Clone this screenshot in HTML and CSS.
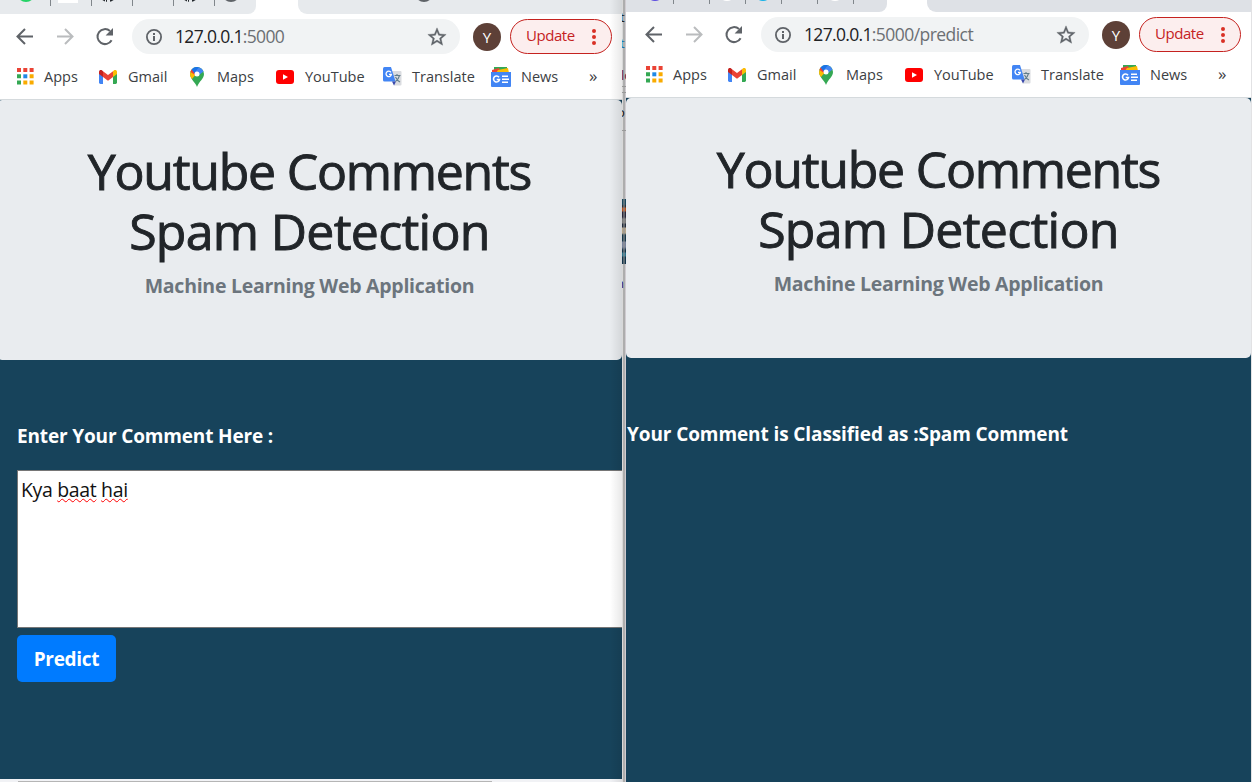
FILE: index.html
```
<!DOCTYPE html>
<html lang="en">
<head>
<meta charset="utf-8">
<title>Youtube Comments Spam Detection</title>
<link rel="stylesheet" href="styles.css">
</head>
<body>
<svg class="defs" aria-hidden="true">
  <symbol id="back" viewBox="0 0 24 24"><path d="M20 11.500H5M12 4 4.500 11.500 12 19" fill="none" stroke="currentColor" stroke-width="2"/></symbol>
  <symbol id="reload" viewBox="0 0 24 24"><path d="M18.600 15.200A7.500 7.500 0 1 1 17 6" fill="none" stroke="currentColor" stroke-width="2"/><path d="M20 3v7.400h-7.400z" fill="currentColor"/></symbol>
  <symbol id="info" viewBox="0 0 18 18"><circle cx="9" cy="9" r="7.1" fill="none" stroke="currentColor" stroke-width="1.8"/><path d="M8 8h2v5H8zM8 5h2v2H8z" fill="currentColor"/></symbol>
  <symbol id="star" viewBox="0 0 24 24"><path fill="currentColor" stroke="currentColor" stroke-width=".4" d="M22 9.24l-7.19-.62L12 2 9.19 8.63 2 9.24l5.46 4.73L5.82 21 12 17.27 18.18 21l-1.63-7.03L22 9.24zM12 15.4l-3.76 2.27 1-4.28-3.32-2.88 4.38-.38L12 6.1l1.71 4.04 4.38.38-3.32 2.88 1 4.28L12 15.4z"/></symbol>
  <symbol id="apps" viewBox="0 0 17 17"><path fill="#ea4335" d="M0 0h4v4H0zM6.3 0h4v4h-4zM12.6 0h4v4h-4z"/><path fill="#34a853" d="M0 6.3h4v4H0zM0 12.6h4v4H0z"/><path fill="#1e88e5" d="M6.3 6.3h4v4h-4z"/><path fill="#f9ab00" d="M12.6 6.3h4v4h-4zM12.6 12.6h4v4h-4zM6.3 12.6h4v4h-4z"/></symbol>
  <symbol id="gmail" viewBox="0 0 18 14"><path fill="#4285f4" d="M0 3v9.6Q0 14 1.4 14H4V6z"/><path fill="#34a853" d="M14 6v8h2.6q1.4 0 1.4-1.4V3z"/><path fill="#fbbc04" d="M14 1.3V7l4-3V2c0-2-2-2.5-3.2-1.5z"/><path fill="#c5221f" d="M0 2v2l4 3V1.3L3.2.5C2-.5 0 0 0 2z"/><path fill="#ea4335" d="M4 1.3 9 5l5-3.7V7l-5 3.8L4 7z"/></symbol>
  <symbol id="maps" viewBox="0 0 14 20"><path fill="#34a853" d="M0 7a7 7 0 0 1 14 0c0 5-5 7-7 13C6 16 0 12 0 7z"/><path fill="#fbbc04" d="M1 3.5 0 7c0 2 .8 3.5 2 5L8 5z"/><path fill="#ea4335" d="M1.6 2.5A7 7 0 0 0 .5 5L5 8l2-4z"/><path fill="#1a73e8" d="M1.6 2.5A7 7 0 0 1 9 .3L5 7z"/><path fill="#4285f4" d="M8.9.3A7 7 0 0 1 13.5 4.5L9 8 5 5z"/><circle cx="7" cy="7" r="2.5" fill="#fff"/></symbol>
  <symbol id="youtube" viewBox="0 0 18 14"><rect width="18" height="14" rx="3" fill="#f00"/><path fill="#fff" d="M7 4.2v5.6L12 7z"/></symbol>
  <symbol id="translate" viewBox="0 0 19 19"><path fill="#dadce0" d="M7 4h10.5q1 0 1 1v12.500q0 1-1 1H11z"/><path fill="#4285f4" d="M1.5 0H8l4.500 14.500h-11Q0 14.500 0 13V1.500Q0 0 1.500 0z"/><path fill="#3949ab" d="M9 14.500h4L11 18.500z"/><path fill="none" stroke="#fff" stroke-width="1.3" d="M8 5.400A2.700 2.700 0 1 0 8.400 7.400H6"/><path fill="none" stroke="#607d8b" stroke-width="1.1" d="M11.500 8.500h6M14 7v1.500M16.500 8.500q-1 4-4 6M12.500 10q2 4 4.500 5"/></symbol>
  <symbol id="news" viewBox="0 0 20 20"><path fill="#34a853" d="M3 0h13v6H3z"/><path fill="#ea4335" d="m1 3 7-2 2 5H1z"/><path fill="#fbbc04" d="m7 3 10-2 1 5H5z"/><path fill="#4285f4" d="M0 5h20v14q0 1-1 1H1q-1 0-1-1z"/><path fill="none" stroke="#fff" stroke-width="1.6" d="M8 10.300A3 3 0 1 0 8.500 12.500H5.700M11 9.200h6M11 12.200h7M11 15.200h6"/></symbol>
</svg>

<main class="desktop">
  <section class="window window-left">
    <div class="tabs">
      <div class="tabs-before">
        <i class="fav wa"></i><i class="sep"></i><i class="fav doc"></i><i class="sep"></i><i class="fav git"></i><i class="sep"></i><i class="fav"></i><i class="sep"></i><i class="fav git"></i><i class="sep"></i><i class="fav globe"></i>
      </div>
      <div class="tabs-after"><i class="fav globe"></i></div>
    </div>
    <nav class="toolbar">
      <svg class="nav"><use href="#back"/></svg><svg class="nav forward"><use href="#back"/></svg><svg class="nav"><use href="#reload"/></svg>
      <div class="omnibox"><svg class="info"><use href="#info"/></svg><span class="url">127.0.0.1<span class="rest">:5000</span></span><svg class="star"><use href="#star"/></svg></div>
      <span class="avatar">Y</span>
      <button class="update"><span>Update</span><i class="dots"></i></button>
    </nav>
    <nav class="bookmarks">
      <a><svg class="i-apps"><use href="#apps"/></svg><span>Apps</span></a>
      <a><svg class="i-gmail"><use href="#gmail"/></svg><span>Gmail</span></a>
      <a><svg class="i-maps"><use href="#maps"/></svg><span>Maps</span></a>
      <a><svg class="i-youtube"><use href="#youtube"/></svg><span>YouTube</span></a>
      <a><svg class="i-translate"><use href="#translate"/></svg><span>Translate</span></a>
      <a><svg class="i-news"><use href="#news"/></svg><span>News</span></a>
      <b>»</b>
    </nav>
    <div class="page">
      <header class="hero"><h1><span class="line-one">Youtube Comments</span><span class="line-two">Spam Detection</span></h1><p>Machine Learning Web Application</p></header>
      <form class="form">
        <label>Enter Your Comment Here :</label>
        <div class="comment">Kya <u>baat</u> <u>hai</u></div>
        <button type="button" class="predict">Predict</button>
      </form>
    </div>
    <div class="taskline"></div>
  </section>
  <div class="gutter">
    <span class="bit bit-t">t</span><span class="bit bit-link">t</span><span class="bit bit-lo">lo</span><i class="rule rule-a"></i><i class="rule rule-b"></i><span class="bit bit-o">o</span><i class="rule rule-c"></i><i class="photo"></i><span class="bit bit-n">n</span>
  </div>
  <section class="window window-right">
    <div class="tabs">
      <div class="tabs-before">
        <i class="fav violet"></i><i class="sep"></i><i class="fav"></i><i class="sep"></i><i class="fav pale"></i><i class="sep"></i><i class="fav sky"></i><i class="sep"></i><i class="fav"></i><i class="sep"></i><i class="fav pale"></i><i class="sep"></i>
      </div>
      <div class="tabs-after"></div>
    </div>
    <nav class="toolbar">
      <svg class="nav"><use href="#back"/></svg><svg class="nav forward"><use href="#back"/></svg><svg class="nav"><use href="#reload"/></svg>
      <div class="omnibox"><svg class="info"><use href="#info"/></svg><span class="url">127.0.0.1<span class="rest">:5000/predict</span></span><svg class="star"><use href="#star"/></svg></div>
      <span class="avatar">Y</span>
      <button class="update"><span>Update</span><i class="dots"></i></button>
    </nav>
    <nav class="bookmarks">
      <a><svg class="i-apps"><use href="#apps"/></svg><span>Apps</span></a>
      <a><svg class="i-gmail"><use href="#gmail"/></svg><span>Gmail</span></a>
      <a><svg class="i-maps"><use href="#maps"/></svg><span>Maps</span></a>
      <a><svg class="i-youtube"><use href="#youtube"/></svg><span>YouTube</span></a>
      <a><svg class="i-translate"><use href="#translate"/></svg><span>Translate</span></a>
      <a><svg class="i-news"><use href="#news"/></svg><span>News</span></a>
      <b>»</b>
    </nav>
    <div class="page">
      <header class="hero"><h1><span class="line-one">Youtube Comments</span><span class="line-two">Spam Detection</span></h1><p>Machine Learning Web Application</p></header>
      <p class="result">Your Comment is Classified as :Spam Comment</p>
    </div>
  </section>
  <div class="edge"></div>
</main>
</body>
</html>
```
FILE: styles.css
```
* { box-sizing: border-box; }
body { margin: 0; font-family: "Open Sans", "Noto Sans", sans-serif; overflow: hidden; }
.defs { position: absolute; width: 0; height: 0; }
.desktop { display: grid; grid-template-columns: 622px 4px 625px 1px; width: 1252px; height: 782px; }
.window { position: relative; display: flex; flex-direction: column; height: 782px; min-width: 0; overflow: hidden; background: #fff; }
.window-left::after { content: ""; position: absolute; inset: 0 0 0 auto; width: 12px; background: linear-gradient(90deg, transparent, rgba(0,0,0,.09)); }

.tabs { display: flex; justify-content: space-between; flex: none; height: 14px; overflow: hidden; }
.tabs-before { display: flex; width: 256px; height: 14px; background: #e7eaed; border-radius: 0 0 8px 0; padding-left: 17px; }
.tabs-after { width: 324px; height: 14px; background: #e7eaed; border-radius: 0 0 0 9px; padding-left: 117px; }
.window-right .tabs { height: 12px; }
.window-right .tabs-before { width: 261px; height: 12px; background: #dee1e6; padding-left: 20px; }
.window-right .tabs-after { height: 12px; background: #dee1e6; }
.fav { flex: none; display: block; width: 18px; height: 18px; margin-top: -16px; border-radius: 50%; }
.sep { flex: none; width: 1px; height: 6px; margin: 0 7px 0 15px; background: #80868b; }
.window-right .sep { height: 4px; margin: 0 8px 0 9px; }
.wa { background: #25d366; }
.doc { width: 20px; height: 19px; margin-right: -2px; background: #fff; border-radius: 0; }
.git { background: linear-gradient(90deg, #24292e 6px, #e7eaed 6px 7px, #24292e 7px 8px, #e7eaed 8px 11px, #24292e 11px); }
.globe { background: #5f6368; }
.violet { background: #5b4be0; margin-top: -17px; }
.sky { background: #14b1e7; margin-top: -17px; }
.pale { background: #fff; margin-top: -17px; }

.toolbar { display: flex; align-items: center; flex: none; height: 45px; padding-left: 13px; }
.window-right .toolbar { padding-left: 16px; }
.nav { width: 24px; height: 24px; margin-right: 16px; color: #5f6368; }
.forward { transform: scaleX(-1); color: #babcbe; }
.omnibox { display: flex; align-items: center; width: 328px; height: 35px; margin-left: -1px; padding: 0 12px 0 13px; border-radius: 18px; background: #f1f3f4; }
.info { width: 18px; height: 18px; color: #5f6368; }
.url { flex: 1; margin: -2px 0 0 12px; font-size: 17.500px; letter-spacing: -.67px; color: #202124; white-space: nowrap; }
.rest { color: #6b6f73; }
.window-right .rest { letter-spacing: -.55px; }
.star { width: 22px; height: 22px; color: #5f6368; }
.avatar { width: 28px; height: 28px; margin-left: 13px; border-radius: 50%; background: #5d4037; color: #fff; font-size: 15px; line-height: 28px; text-align: center; }
.update { display: flex; align-items: center; width: 102px; height: 35px; margin-left: 9px; padding: 0 15px 0 15px; border: 1px solid #c5221f; border-radius: 18px; background: #fceeee; color: #c5221f; font: 15px "Open Sans", sans-serif; letter-spacing: -.45px; }
.update span { flex: 1; margin-top: -3px; text-align: left; }
.dots { width: 4px; height: 4px; border-radius: 50%; background: #d93025; box-shadow: 0 -6px #d93025, 0 6px #d93025; }

.bookmarks { display: grid; grid-template-columns: 82px 91px 86px 107px 108px 98px 20px; align-items: center; flex: none; height: 41px; padding: 0 0 5px 17px; border-bottom: 1px solid #d5dadd; font-size: 14.500px; color: #3c4043; }
.window-right .bookmarks { padding-left: 20px; }
.bookmarks a { display: flex; align-items: center; }
.bookmarks b { margin-top: -2px; font-weight: 500; font-size: 17px; line-height: 20px; }
.i-apps { width: 17px; height: 17px; margin-right: 10px; }
.i-gmail { width: 18px; height: 14px; margin-right: 11px; }
.i-maps { width: 14px; height: 20px; margin-right: 13px; }
.i-youtube { width: 18px; height: 14px; margin-right: 11px; }
.i-translate { width: 19px; height: 19px; margin-right: 10px; }
.i-news { width: 20px; height: 20px; margin-right: 10px; }

.page { flex: 1; background: #17435b; overflow: hidden; }
.hero { height: 260px; padding: 41px 0 0; border-radius: 5px; background: #e9ecef; text-align: center; }
.window-left .hero { margin-left: -3px; }
.hero h1 { margin: 0; font-size: 50px; line-height: 60px; font-weight: 500; color: #212529; white-space: nowrap; -webkit-text-stroke: .9px #212529; }
.line-one, .line-two { display: block; letter-spacing: -1.25px; }
.line-two { letter-spacing: -.7px; }
.hero p { margin: 11px 0 0; font-size: 19.500px; line-height: 28px; font-weight: 700; color: #6c757d; letter-spacing: -.27px; }
.form { padding: 62px 0 0 17px; }
.form label { display: block; height: 48px; font-size: 19px; line-height: 28px; font-weight: 700; color: #fff; letter-spacing: -.15px; }
.comment { width: 700px; height: 158px; padding: 4px 3px; border: 1px solid #767676; background: #fff; font-size: 19.500px; line-height: 30px; letter-spacing: -.35px; color: #111; }
.comment u { text-decoration: underline wavy red 1px; text-underline-offset: 1px; text-decoration-skip-ink: none; }
.predict { display: block; width: 99px; height: 47px; margin-top: 7px; padding: 0; border: 0; border-radius: 5px; background: #007bff; color: #fff; font: 700 19px "Open Sans", sans-serif; letter-spacing: -.3px; }
.result { margin: 62px 0 0 1px; font-size: 19px; line-height: 28px; font-weight: 700; color: #fff; letter-spacing: -.1px; white-space: nowrap; }
.taskline { flex: none; height: 3px; padding: 2px 0 0 18px; background: #f1f2f5; }
.taskline::before { content: ""; display: block; width: 474px; height: 1px; background: #b5b5b5; }

.gutter { position: relative; overflow: hidden; background: linear-gradient(90deg, #d8d8d8 1px, #adadad 1px 3px, #cfcbd0 3px); }
.bit { position: absolute; left: -2px; font-size: 13px; line-height: 16px; color: #111; }
.bit-t { top: 9px; }
.bit-link { top: 35px; color: #0b6fae; }
.bit-lo { top: 67px; left: -1px; color: #5d2147; }
.bit-o { top: 104px; left: -5px; }
.bit-n { top: 275px; left: -6px; color: #2d1463; }
.rule { position: absolute; left: 0; width: 4px; height: 1px; background: #999; }
.rule-a { top: 86px; }
.rule-b { top: 92px; }
.rule-c { top: 130px; }
.photo { position: absolute; left: 0; top: 199px; width: 4px; height: 65px; background: linear-gradient(90deg, transparent 1px, rgba(150,150,150,.55) 1px 3px, transparent 3px), linear-gradient(#18465b 0 6px, #27323c 6px 8px, #b5521f 9px 12px, #27263a 13px 18px, #777 20px 24px, #222c3d 25px 28px, #b6a58a 29px 34px, #18384a 36px 42px, #77819b 43px 48px, #143247 51px 53px, #28718a 54px 57px, #12344a 58px); }
.edge { background: #e2e2e4; }
```
